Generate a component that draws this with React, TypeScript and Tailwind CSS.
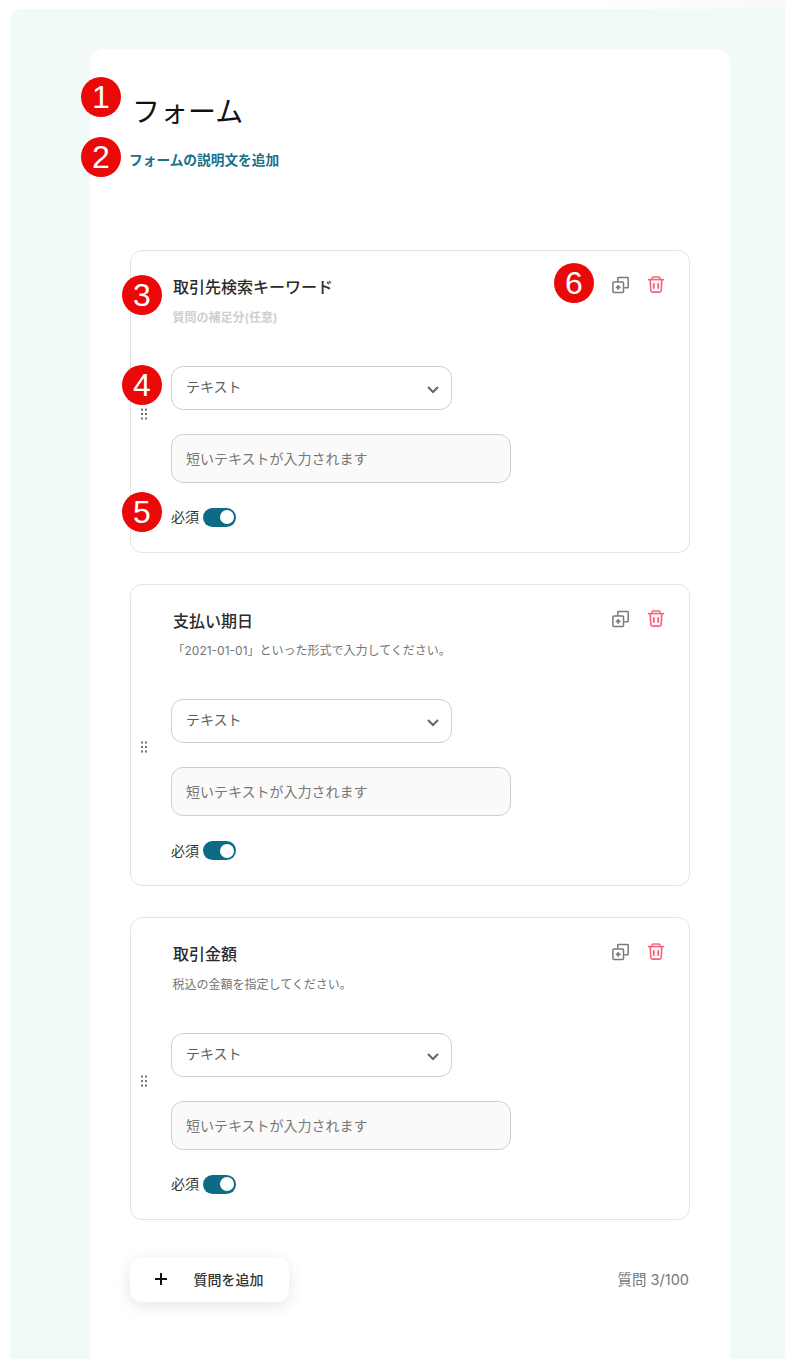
import React from "react";

const font = { fontFamily: 'Inter, "Noto Sans CJK JP", sans-serif' };

function CopyIcon() {
  return (
    <svg width="18" height="18" viewBox="0 0 18 18" fill="none" stroke="#7a7a7a" strokeWidth="1.5">
      <path d="M5.8 5.8V2.2a.8.8 0 0 1 .8-.8h8.8a.8.8 0 0 1 .8.8V11a.8.8 0 0 1-.8.8h-3.2" />
      <rect x="0.9" y="6" width="10.6" height="10.6" rx="1" />
      <path d="M6.2 8.9v4.8M3.8 11.3h4.8" strokeWidth="1.8" />
    </svg>
  );
}

function TrashIcon() {
  return (
    <svg width="18" height="18" viewBox="0 0 18 18" fill="none" stroke="#f9637a" strokeWidth="1.6">
      <path d="M0.8 3.6h16.4" />
      <path d="M5 3.6V2.4a1.4 1.4 0 0 1 1.4-1.4h5.2A1.4 1.4 0 0 1 13 2.4v1.2" />
      <path d="M3.2 3.6l.6 10.8a1.8 1.8 0 0 0 1.8 1.7h6.8a1.8 1.8 0 0 0 1.8-1.7l.6-10.8" />
      <path d="M6.8 7.2v5.6M11.2 7.2v5.6" strokeWidth="1.9" />
    </svg>
  );
}

function Grip() {
  return (
    <svg width="6" height="13" viewBox="0 0 6 13" fill="#6a6a6a">
      {[0, 4.5, 9].map((y) => (
        <g key={y}>
          <rect x="0" y={y + 0.5} width="2" height="2" rx="0.5" />
          <rect x="4" y={y + 0.5} width="2" height="2" rx="0.5" />
        </g>
      ))}
    </svg>
  );
}

function Badge({ n, className }: { n: number; className: string }) {
  return (
    <div
      className={`absolute flex h-10 w-10 items-center justify-center rounded-full bg-[#eb0808] text-[32px] leading-none text-white ${className}`}
      style={{ fontFamily: '"Liberation Sans", sans-serif' }}
    >
      {n}
    </div>
  );
}

function Card({ title, sub, muted }: { title: string; sub: string; muted?: boolean }) {
  return (
    <div className="flex h-[302.5px] w-[560px] rounded-[12px] border border-[#e4e4e4] bg-white">
      <div className="flex w-[26px] items-center justify-end pr-[10px] pt-[26px]">
        <Grip />
      </div>
      <div className="flex-1 pl-[14px] pt-[26px]">
        <div className="flex items-start justify-between pr-[24px]">
          <div className="pl-[2px]">
            <div className="text-[16px] font-medium leading-[20px] text-[#2b2b2b]">{title}</div>
            <div
              className={`ml-[-0.5px] mt-[10.5px] text-[12px] leading-[20px] ${
                muted ? "font-semibold text-[#cfcfcf]" : "text-[#757575]"
              }`}
            >
              {sub}
            </div>
          </div>
          <div className="mt-[-1px] flex items-center gap-[17px]">
            <CopyIcon />
            <TrashIcon />
          </div>
        </div>
        <div className="mt-[38.1px] flex h-[44px] w-[281px] items-center justify-between rounded-[12px] border border-[#ccd0d6] bg-white pl-[14px] pr-[11px]">
          <span className="mt-[-3px] text-[14px] text-[#5c5c5c]">テキスト</span>
          <svg className="mt-[2px]" width="14" height="14" viewBox="0 0 14 14" fill="none" stroke="#666" strokeWidth="2">
            <path d="M2 5l5 5 5-5" />
          </svg>
        </div>
        <div className="mt-[24px] flex h-[49px] w-[340px] items-center rounded-[12px] border border-[#ccd0d6] bg-[#fafafa] pl-[14px] text-[14px] text-[#777]">
          短いテキストが入力されます
        </div>
        <div className="mt-[24.6px] flex items-center gap-[4px]">
          <span className="text-[14px] leading-[20px] text-[#333]">必須</span>
          <div className="flex h-[19px] w-[33px] items-center justify-end rounded-full bg-[#0d6b85] pr-[2px]">
            <div className="h-[14px] w-[14px] rounded-full bg-white" />
          </div>
        </div>
      </div>
    </div>
  );
}

export default function App() {
  return (
    <div className="relative h-[1359px] w-[785px] overflow-hidden bg-gradient-to-r from-white from-75% to-[#f9f9f9]" style={font}>
      <div className="ml-[10px] mt-[9px] h-[1350px] rounded-tl-[10px] bg-[#f2faf9] pl-[80px] pr-[55px] pt-[40px]">
        <div className="h-[1310px] w-[640px] rounded-t-[14px] bg-white pl-[40px] pt-[45px]">
          <h1 className="pl-[2px] text-[28px] font-normal leading-[38px] text-[#111]" style={{ fontFamily: '"Liberation Sans", "Noto Sans CJK JP", sans-serif' }}>
            フォーム
          </h1>
          <div className="ml-[-1px] mt-[18px] text-[13.7px] font-semibold leading-[20px] text-[#1a7189]">
            フォームの説明文を追加
          </div>
          <div className="mt-[80px] flex flex-col gap-[31px]">
            <Card title="取引先検索キーワード" sub="質問の補足分(任意)" muted />
            <Card title="支払い期日" sub="「2021-01-01」といった形式で入力してください。" />
            <Card title="取引金額" sub="税込の金額を指定してください。" />
          </div>
          <div className="mt-[37px] flex w-[559px] items-center justify-between">
            <div className="ml-[0.4px] flex h-[45px] w-[159px] items-center rounded-[12px] bg-white pl-[24px] shadow-[0_4px_16px_rgba(0,0,0,0.1)]">
              <svg width="14" height="14" viewBox="0 0 14 14" fill="none" stroke="#111" strokeWidth="2">
                <path d="M7 1v12M1 7h12" />
              </svg>
              <span className="ml-[25px] text-[14px] font-medium text-[#333]">質問を追加</span>
            </div>
            <span className="mt-[1px] text-[14.5px] text-[#777]">質問 3/100</span>
          </div>
        </div>
      </div>
      <Badge n={1} className="left-[81px] top-[77px]" />
      <Badge n={2} className="left-[81px] top-[137px]" />
      <Badge n={3} className="left-[122px] top-[275px]" />
      <Badge n={4} className="left-[122px] top-[365px]" />
      <Badge n={5} className="left-[122px] top-[492px]" />
      <Badge n={6} className="left-[554px] top-[263px]" />
    </div>
  );
}
